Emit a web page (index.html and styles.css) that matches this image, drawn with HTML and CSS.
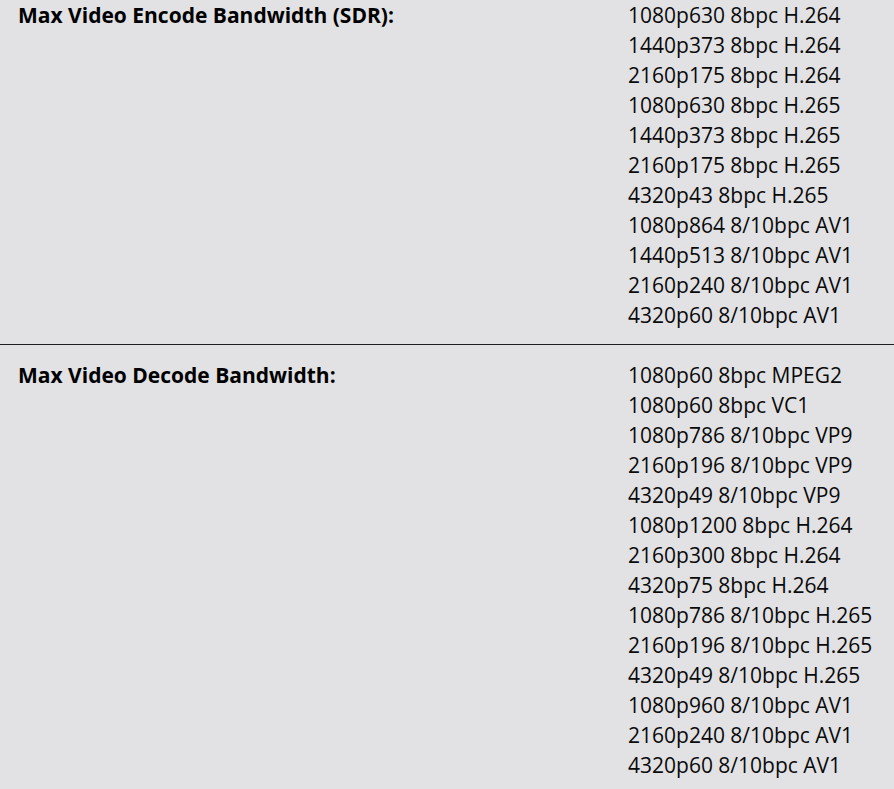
FILE: index.html
```html
<!DOCTYPE html>
<html>
<head>
<meta charset="utf-8">
<link rel="stylesheet" href="styles.css">
</head>
<body>
<div class="specs">
  <div class="row first">
    <div class="label">Max Video Encode Bandwidth (SDR):</div>
    <div class="value">
      <div>1080p630 8bpc H.264</div>
      <div>1440p373 8bpc H.264</div>
      <div>2160p175 8bpc H.264</div>
      <div>1080p630 8bpc H.265</div>
      <div>1440p373 8bpc H.265</div>
      <div>2160p175 8bpc H.265</div>
      <div>4320p43 8bpc H.265</div>
      <div>1080p864 8/10bpc AV1</div>
      <div>1440p513 8/10bpc AV1</div>
      <div>2160p240 8/10bpc AV1</div>
      <div>4320p60 8/10bpc AV1</div>
    </div>
  </div>
  <div class="row">
    <div class="label">Max Video Decode Bandwidth:</div>
    <div class="value">
      <div>1080p60 8bpc MPEG2</div>
      <div>1080p60 8bpc VC1</div>
      <div>1080p786 8/10bpc VP9</div>
      <div>2160p196 8/10bpc VP9</div>
      <div>4320p49 8/10bpc VP9</div>
      <div>1080p1200 8bpc H.264</div>
      <div>2160p300 8bpc H.264</div>
      <div>4320p75 8bpc H.264</div>
      <div>1080p786 8/10bpc H.265</div>
      <div>2160p196 8/10bpc H.265</div>
      <div>4320p49 8/10bpc H.265</div>
      <div>1080p960 8/10bpc AV1</div>
      <div>2160p240 8/10bpc AV1</div>
      <div>4320p60 8/10bpc AV1</div>
    </div>
  </div>
</div>
</body>
</html>
```
FILE: styles.css
```css
html, body {
  margin: 0;
  padding: 0;
  background: #e2e2e4;
}
body {
  font-family: "Open Sans", "Noto Sans", sans-serif;
  font-size: 21px;
  line-height: 30px;
  color: #0a0a0a;
}
.specs {
  width: 894px;
}
.row {
  display: grid;
  grid-template-columns: 628px 1fr;
  padding: 15px 0 14px;
  border-top: 1px solid #1e1e1e;
}
.row.first {
  border-top: none;
  padding-top: 0;
}
.label {
  padding-left: 18px;
  font-weight: 700;
  color: #000;
}
```
